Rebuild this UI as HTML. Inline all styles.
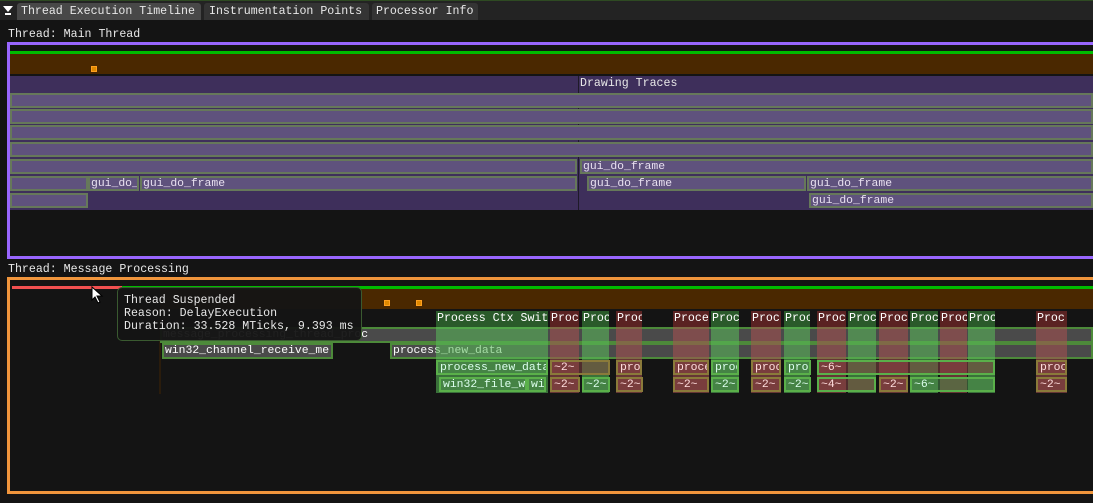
<!DOCTYPE html>
<html><head><meta charset="utf-8"><style>
*{margin:0;padding:0;box-sizing:border-box}
body{width:1093px;height:503px;background:#141414;position:relative;overflow:hidden;font-family:"Liberation Mono","DejaVu Sans Mono",monospace;font-size:11.6px;color:#e8e8e8}
.a{position:absolute;white-space:nowrap;overflow:hidden;line-height:14px}
.bar{position:absolute;background:#5f527d;border:2px solid #66785a;color:#e8e0f0;line-height:12px;font-size:11.4px;padding-left:1px;white-space:nowrap;overflow:hidden;height:15px}
.gb{position:absolute;background:#4a4a4a;border:2px solid #4d8a3a;color:#fff;line-height:12px;font-size:11.4px;padding-left:1px;white-space:nowrap;overflow:hidden;height:16px}
.hdr{position:absolute;top:311px;height:16px;color:#fff;line-height:15px;padding-left:1px;overflow:hidden;white-space:nowrap}
.hg{background:#2a5a2a}.hr{background:#5a2222}
.bd{position:absolute;top:327px;height:66px}
.bg_{background:rgba(90,190,90,0.55)}.br_{background:rgba(170,80,80,0.55)}
.sm{position:absolute;height:15px;border:2px solid;line-height:12px;font-size:11.4px;padding-left:2px;overflow:hidden;white-space:nowrap}
.sg{border-color:#5ab04a;background:rgba(80,150,80,0.5);color:#dfe}
.sr{border-color:#8a7a3a;background:rgba(140,70,70,0.5);color:#fdd}
</style></head><body>
<div class="a" style="left:0;top:0;width:1093px;height:20px;background:#232323;border-top:1px solid #2e4a22"></div>
<div class="a" style="left:3px;top:6px;width:0;height:0;border-left:5px solid transparent;border-right:5px solid transparent;border-top:6px solid #fff"></div>
<div class="a" style="left:5px;top:13px;width:6px;height:2px;background:#fff"></div>
<div class="a" style="left:17px;top:3px;width:184px;height:17px;background:#484848;border-radius:3px 3px 0 0;padding-left:4px;line-height:17px">Thread Execution Timeline</div>
<div class="a" style="left:204px;top:3px;width:165px;height:17px;background:#343434;border-radius:3px 3px 0 0;padding-left:5px;line-height:17px">Instrumentation Points</div>
<div class="a" style="left:372px;top:3px;width:106px;height:17px;background:#343434;border-radius:3px 3px 0 0;padding-left:4px;line-height:17px">Processor Info</div>

<div class="a" style="left:8px;top:28px">Thread: Main Thread</div>
<div class="a" style="left:7px;top:42px;width:1090px;height:217px;border:3px solid #9966ff;border-right:none"></div>
<div class="a" style="left:10px;top:51px;width:1083px;height:3px;background:#00bb00"></div>
<div class="a" style="left:10px;top:54px;width:1083px;height:20px;background:#4a2800"></div>
<div class="a" style="left:91px;top:66px;width:6px;height:6px;background:#e08a00;border:1px solid #ffa020"></div>
<div class="a" style="left:10px;top:76px;width:1083px;height:134px;background:#3e2f5b"></div>
<div class="a" style="left:578px;top:76px;width:1px;height:134px;background:#1e1a28"></div>
<div class="a" style="left:580px;top:77px">Drawing Traces</div>
<div class="bar" style="left:10px;top:93px;width:1083px"></div>
<div class="bar" style="left:10px;top:109px;width:1083px"></div>
<div class="bar" style="left:10px;top:125px;width:1083px"></div>
<div class="bar" style="left:10px;top:142px;width:1083px"></div>
<div class="bar" style="left:10px;top:159px;width:567px"></div>
<div class="bar" style="left:580px;top:159px;width:513px">gui_do_frame</div>
<div class="bar" style="left:10px;top:176px;width:78px"></div>
<div class="bar" style="left:88px;top:176px;width:51px">gui_do_</div>
<div class="bar" style="left:140px;top:176px;width:437px">gui_do_frame</div>
<div class="bar" style="left:587px;top:176px;width:219px">gui_do_frame</div>
<div class="bar" style="left:807px;top:176px;width:286px">gui_do_frame</div>
<div class="bar" style="left:10px;top:193px;width:78px"></div>
<div class="bar" style="left:809px;top:193px;width:284px">gui_do_frame</div>

<div class="a" style="left:8px;top:263px">Thread: Message Processing</div>
<div class="a" style="left:7px;top:277px;width:1090px;height:217px;border:3px solid #f0953c;border-right:none"></div>
<div class="a" style="left:12px;top:286px;width:110px;height:3px;background:#f05050"></div>
<div class="a" style="left:122px;top:286px;width:971px;height:3px;background:#00bb00"></div>
<div class="a" style="left:160px;top:289px;width:933px;height:20px;background:#4a2800"></div>
<div class="a" style="left:384px;top:300px;width:6px;height:6px;background:#e08a00;border:1px solid #ffa020"></div>
<div class="a" style="left:416px;top:300px;width:6px;height:6px;background:#e08a00;border:1px solid #ffa020"></div>
<div class="a" style="left:159px;top:309px;width:2px;height:85px;background:#2a1c0c"></div>
<div class="gb" style="left:160px;top:327px;width:933px">message_processing_thread_proc</div>
<div class="gb" style="left:162px;top:343px;width:171px">win32_channel_receive_me</div>
<div class="gb" style="left:390px;top:343px;width:703px">process_new_data</div>

<div class="hdr hg" style="left:436px;width:112px">Process Ctx Swit</div><div class="bd bg_" style="left:436px;width:112px"></div>
<div class="hdr hr" style="left:550px;width:29px">Proc</div><div class="bd br_" style="left:550px;width:29px"></div>
<div class="hdr hg" style="left:582px;width:27px">Proc</div><div class="bd bg_" style="left:582px;width:27px"></div>
<div class="hdr hr" style="left:616px;width:26px">Proc</div><div class="bd br_" style="left:616px;width:26px"></div>
<div class="hdr hr" style="left:673px;width:36px">Proce</div><div class="bd br_" style="left:673px;width:36px"></div>
<div class="hdr hg" style="left:711px;width:28px">Proc</div><div class="bd bg_" style="left:711px;width:28px"></div>
<div class="hdr hr" style="left:751px;width:30px">Proc</div><div class="bd br_" style="left:751px;width:30px"></div>
<div class="hdr hg" style="left:784px;width:26px">Proc</div><div class="bd bg_" style="left:784px;width:26px"></div>
<div class="hdr hr" style="left:817px;width:29px">Proc</div><div class="bd br_" style="left:817px;width:29px"></div>
<div class="hdr hg" style="left:848px;width:28px">Proc</div><div class="bd bg_" style="left:848px;width:28px"></div>
<div class="hdr hr" style="left:879px;width:29px">Proc</div><div class="bd br_" style="left:879px;width:29px"></div>
<div class="hdr hg" style="left:910px;width:28px">Proc</div><div class="bd bg_" style="left:910px;width:28px"></div>
<div class="hdr hr" style="left:940px;width:27px">Proc</div><div class="bd br_" style="left:940px;width:27px"></div>
<div class="hdr hg" style="left:968px;width:27px">Proc</div><div class="bd bg_" style="left:968px;width:27px"></div>
<div class="hdr hr" style="left:1036px;width:31px">Proc</div><div class="bd br_" style="left:1036px;width:31px"></div>

<div class="sm sg" style="left:436px;top:360px;width:112px">process_new_data</div>
<div class="sm sr" style="left:550px;top:360px;width:60px">~2~</div>
<div class="sm sr" style="left:616px;top:360px;width:26px">proc</div>
<div class="sm sr" style="left:673px;top:360px;width:36px">proce</div>
<div class="sm sg" style="left:711px;top:360px;width:28px">proc</div>
<div class="sm sr" style="left:751px;top:360px;width:30px">proc</div>
<div class="sm sg" style="left:784px;top:360px;width:27px">proc</div>
<div class="sm sr" style="left:817px;top:360px;width:178px;border-color:#5ab04a">~6~</div>
<div class="sm sr" style="left:1036px;top:360px;width:31px">proc</div>
<div class="sm sg" style="left:439px;top:377px;width:88px">win32_file_w</div>
<div class="sm sg" style="left:527px;top:377px;width:19px">wi</div>
<div class="sm sr" style="left:550px;top:377px;width:30px">~2~</div>
<div class="sm sg" style="left:582px;top:377px;width:28px">~2~</div>
<div class="sm sr" style="left:616px;top:377px;width:27px">~2~</div>
<div class="sm sr" style="left:673px;top:377px;width:36px">~2~</div>
<div class="sm sg" style="left:711px;top:377px;width:28px">~2~</div>
<div class="sm sr" style="left:751px;top:377px;width:30px">~2~</div>
<div class="sm sg" style="left:784px;top:377px;width:27px">~2~</div>
<div class="sm sr" style="left:817px;top:377px;width:59px;border-color:#5ab04a">~4~</div>
<div class="sm sr" style="left:879px;top:377px;width:29px">~2~</div>
<div class="sm sg" style="left:910px;top:377px;width:85px">~6~</div>
<div class="sm sr" style="left:1036px;top:377px;width:31px">~2~</div>

<div class="a" style="left:117px;top:287px;width:245px;height:54px;background:rgba(20,20,20,0.95);border:1px solid #3a5a30;border-radius:5px;padding:6px 0 0 6px;line-height:13px">Thread Suspended<br>Reason: DelayExecution<br>Duration: 33.528 MTicks, 9.393 ms</div>
<svg class="a" style="left:91px;top:286px" width="14" height="18" viewBox="0 0 14 18"><path d="M1 1 L1 14 L4 11 L7 17 L9 16 L6 10 L11 10 Z" fill="#fff" stroke="#000" stroke-width="1"/></svg>
</body></html>
